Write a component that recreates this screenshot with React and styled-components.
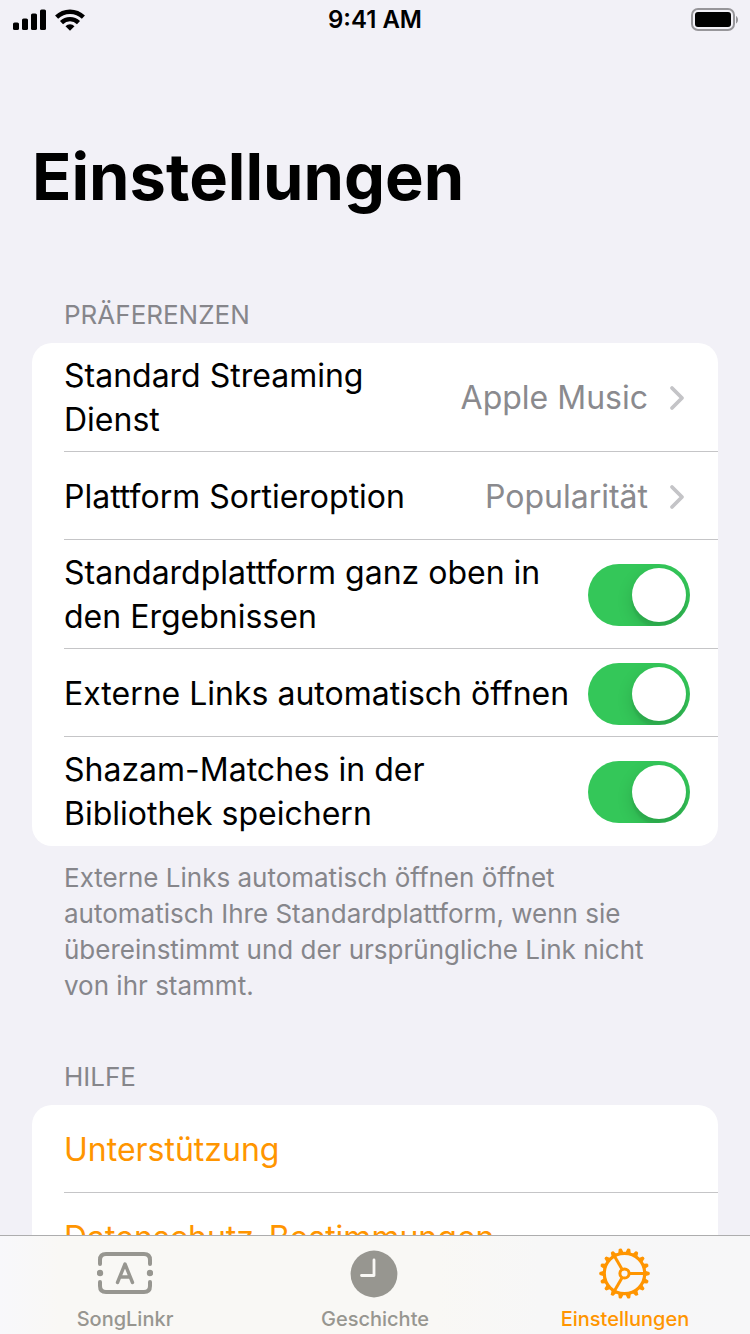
import React, { useId, useState } from 'react';
import styled, { createGlobalStyle } from 'styled-components';

const color = {
  page: '#f2f1f7',
  card: '#ffffff',
  text: '#000000',
  muted: '#86868b',
  value: '#8a8a8e',
  line: '#c5c5c7',
  chevron: '#c4c4c7',
  accent: '#ff9500',
  on: '#34c759',
  tab: '#979690',
};

const GlobalStyle = createGlobalStyle`
  *, *::before, *::after { box-sizing: border-box; }
  body { margin: 0; background: ${color.page}; }
  body, button, input {
    font-family: Inter, 'Liberation Sans', sans-serif;
  }
`;

const Screen = styled.div`
  display: flex;
  flex-direction: column;
  height: 100vh;
  background: ${color.page};
  color: ${color.text};
`;

const StatusBar = styled.header`
  display: grid;
  grid-template-columns: 1fr auto 1fr;
  align-items: center;
  flex: none;
  height: 40px;
  padding: 0 12px;
`;

const StatusIcons = styled.div`
  display: flex;
  align-items: center;
  gap: 8px;
  justify-content: ${(p) => (p.$end ? 'flex-end' : 'flex-start')};

  svg { display: block; }
`;

const Clock = styled.time`
  font-size: 24px;
  line-height: 40px;
  font-weight: 600;
`;

const Content = styled.main`
  flex: 1;
  min-height: 0;
  overflow-y: auto;
  scrollbar-width: none;
  padding: 97px 32px 0;
`;

const Title = styled.h1`
  margin: 0 0 82px;
  font-size: 65px;
  line-height: 80px;
  font-weight: 700;
`;

const Section = styled.section`
  margin-bottom: 57px;
`;

const SectionTitle = styled.h2`
  margin: 0;
  padding: 0 32px 12px;
  font-size: 26px;
  line-height: 32px;
  font-weight: 400;
  color: ${color.muted};
`;

const Card = styled.div`
  overflow: hidden;
  border-radius: 20px;
  background: ${color.card};
  padding-left: 32px;
`;

const Row = styled.div`
  display: flex;
  align-items: center;
  justify-content: space-between;
  gap: 12px;
  width: 100%;
  min-height: 88px;
  padding: 11px 28px 9px 0;
  border: 0;
  border-bottom: 1px solid ${color.line};
  background: none;
  color: inherit;
  font-size: 32px;
  line-height: 44px;
  text-align: left;
  text-decoration: none;

  &:last-child { border-bottom-color: transparent; }
`;

const Value = styled.span`
  display: flex;
  flex: none;
  align-items: center;
  gap: 21px;
  padding-right: 5px;
  color: ${color.value};
`;

const RowLink = styled(Row)`
  color: ${color.accent};
`;

const Switch = styled.input`
  appearance: none;
  flex: none;
  overflow: hidden;
  width: 102px;
  height: 62px;
  margin: 0;
  padding: 4px;
  border-radius: 31px;
  background: ${color.on};
  cursor: pointer;

  &::before {
    content: '';
    display: block;
    width: 54px;
    height: 54px;
    margin-left: auto;
    border-radius: 50%;
    background: #ffffff;
    box-shadow: 0 6px 16px rgba(0, 0, 0, 0.15), 0 6px 2px rgba(0, 0, 0, 0.06);
  }

  &:not(:checked) { background: #e9e9ea; }
  &:not(:checked)::before { margin-left: 0; }
`;

const Note = styled.p`
  margin: 0;
  padding: 14px 64px 0 32px;
  font-size: 26px;
  line-height: 36px;
  color: ${color.muted};
`;

const TabBar = styled.nav`
  display: grid;
  grid-template-columns: repeat(3, 1fr);
  flex: none;
  border-top: 1px solid #adadae;
  background: linear-gradient(90deg, #f8f8fb 0, #f9f8f5 8%, #f9f8f5 58%, #f7f7f7 72%, #f7f7f8 100%);
`;

const Tab = styled.button`
  display: flex;
  flex-direction: column;
  align-items: center;
  gap: 7px;
  padding: 10px 0 3px;
  border: 0;
  background: none;
  color: ${(p) => (p.$active ? color.accent : color.tab)};
  font-size: 20px;
  line-height: 24px;
  font-weight: 500;

  svg { display: block; }
`;

const Chevron = () => (
  <svg width="16" height="26" viewBox="0 0 16 26" fill="none" stroke={color.chevron} strokeWidth="3.8" strokeLinecap="round" strokeLinejoin="round" aria-hidden="true">
    <path d="M3 3l10 10L3 23" />
  </svg>
);

const Signal = () => (
  <svg width="35" height="22" viewBox="0 0 35 22" aria-hidden="true">
    <rect x="1" y="13.500" width="6" height="7.500" rx="1.600" />
    <rect x="10" y="9.500" width="6" height="11.500" rx="1.600" />
    <rect x="19" y="4.500" width="6" height="16.500" rx="1.600" />
    <rect x="28" y="0.500" width="6" height="20.500" rx="1.600" />
  </svg>
);

const Wifi = () => (
  <svg width="30" height="22" viewBox="0 0 30 22" aria-hidden="true">
    <g fill="none" stroke="#000" strokeWidth="4.400">
      <path d="M1.600 8.200a19.200 19.200 0 0 1 26.800 0" />
      <path d="M6.500 13.600a12.200 12.200 0 0 1 17 0" />
    </g>
    <path d="M15 21.800l-4.500-4.600a6.400 6.400 0 0 1 9 0z" />
  </svg>
);

const Battery = () => (
  <svg width="47" height="24" viewBox="0 0 47 24" aria-hidden="true">
    <rect x="1" y="1" width="42" height="21" rx="6" fill="none" stroke="#97969a" strokeWidth="2" />
    <rect x="4" y="4" width="36" height="15" rx="3" />
    <path d="M45 8v7.600c1.200-.6 2-2 2-3.800S46.200 8.600 45 8z" fill="#97969a" />
  </svg>
);

const TicketIcon = () => (
  <svg width="56" height="54" viewBox="0 0 56 54" fill="none" stroke="currentColor" strokeWidth="4" strokeLinecap="round" strokeLinejoin="round" aria-hidden="true">
    <path d="M3 18V14q0-6 6-6H47q6 0 6 6V18" />
    <path d="M3 36V40q0 6 6 6H47q6 0 6-6V36" />
    <g fill="currentColor" stroke="none">
      <circle cx="3" cy="27" r="3.200" />
      <circle cx="53" cy="27" r="3.200" />
    </g>
    <path d="M20.500 36.500L28 18L35.500 36.500M23.500 31H32.500" strokeWidth="3.400" />
  </svg>
);

const ClockIcon = () => (
  <svg width="54" height="54" viewBox="0 0 54 54" aria-hidden="true">
    <circle cx="26" cy="28" r="23.400" fill="currentColor" />
    <path d="M26 14V29.500H13.500" fill="none" stroke="#f9f8f5" strokeWidth="2.800" strokeLinecap="round" strokeLinejoin="round" />
  </svg>
);

const GearIcon = () => (
  <svg width="54" height="54" viewBox="-26.500 -27.500 54 54" fill="none" stroke="currentColor" aria-hidden="true">
    <circle r="20.200" strokeWidth="3.200" />
    <circle r="4.600" strokeWidth="3" />
    {[0, 120, 240].map((angle) => (
      <path key={angle} d="M5.500 0H20" strokeWidth="3" transform={`rotate(${angle})`} />
    ))}
    {Array.from({ length: 18 }, (_, i) => (
      <path key={i} d="M20.500-2.800L24.800-1.500Q26 0 24.800 1.500L20.500 2.800z" fill="currentColor" stroke="none" transform={`rotate(${i * 20})`} />
    ))}
  </svg>
);

function ChoiceRow({ label, value }) {
  return (
    <Row as="button" type="button">
      <span>{label}</span>
      <Value>
        {value}
        <Chevron />
      </Value>
    </Row>
  );
}

function SwitchRow({ label }) {
  const id = useId();
  const [on, setOn] = useState(true);
  return (
    <Row>
      <label htmlFor={id}>{label}</label>
      <Switch id={id} type="checkbox" role="switch" checked={on} onChange={() => setOn(!on)} />
    </Row>
  );
}

const tabs = [
  { label: 'SongLinkr', Icon: TicketIcon },
  { label: 'Geschichte', Icon: ClockIcon },
  { label: 'Einstellungen', Icon: GearIcon },
];

export default function App() {
  const [active, setActive] = useState('Einstellungen');
  return (
    <Screen>
      <GlobalStyle />
      <StatusBar>
        <StatusIcons>
          <Signal />
          <Wifi />
        </StatusIcons>
        <Clock>9:41 AM</Clock>
        <StatusIcons $end>
          <Battery />
        </StatusIcons>
      </StatusBar>
      <Content>
        <Title>Einstellungen</Title>
        <Section>
          <SectionTitle>PRÄFERENZEN</SectionTitle>
          <Card>
            <ChoiceRow label="Standard Streaming Dienst" value="Apple Music" />
            <ChoiceRow label="Plattform Sortieroption" value="Popularität" />
            <SwitchRow label="Standardplattform ganz oben in den Ergebnissen" />
            <SwitchRow label="Externe Links automatisch öffnen" />
            <SwitchRow label="Shazam-Matches in der Bibliothek speichern" />
          </Card>
          <Note>
            Externe Links automatisch öffnen öffnet automatisch Ihre Standardplattform, wenn sie
            übereinstimmt und der ursprüngliche Link nicht von ihr stammt.
          </Note>
        </Section>
        <Section>
          <SectionTitle>HILFE</SectionTitle>
          <Card>
            <RowLink as="a" href="#unterstuetzung">Unterstützung</RowLink>
            <RowLink as="a" href="#datenschutz">Datenschutz-Bestimmungen</RowLink>
          </Card>
        </Section>
      </Content>
      <TabBar>
        {tabs.map(({ label, Icon }) => (
          <Tab key={label} type="button" $active={label === active} onClick={() => setActive(label)}>
            <Icon />
            {label}
          </Tab>
        ))}
      </TabBar>
    </Screen>
  );
}
